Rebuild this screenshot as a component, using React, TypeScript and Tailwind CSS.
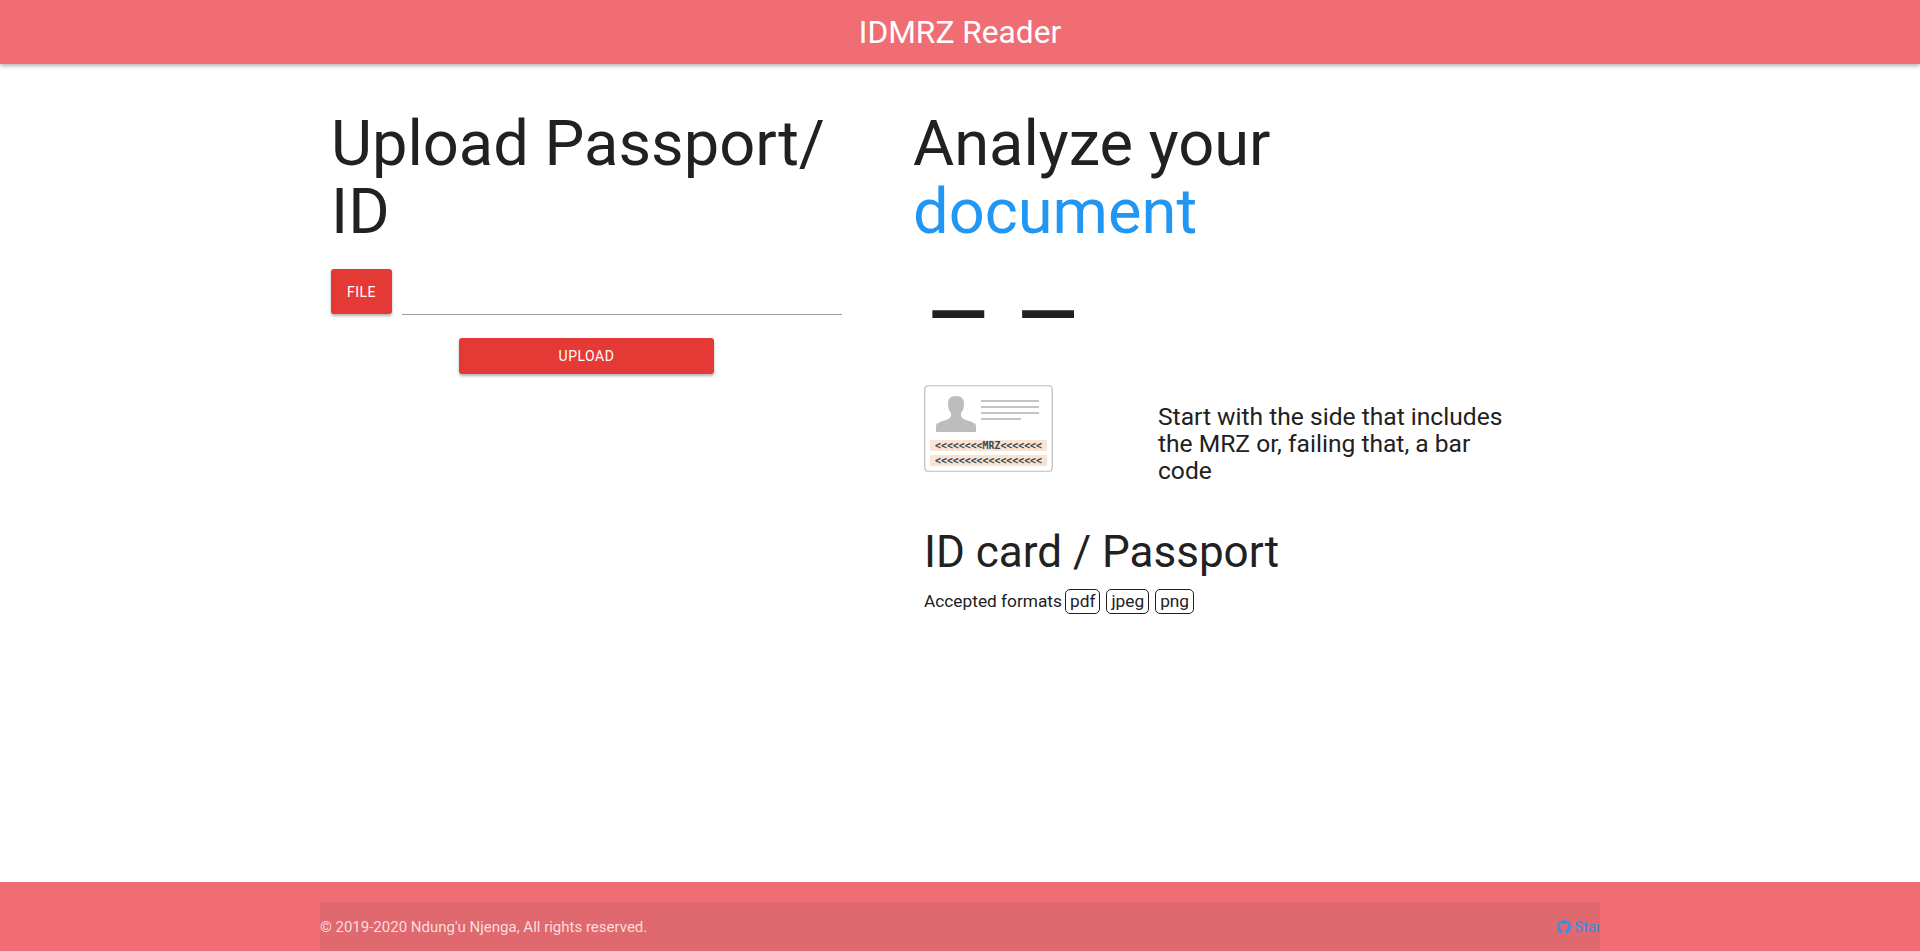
import { FaGithub } from "react-icons/fa";

const font = { fontFamily: "Roboto, sans-serif" };

function MrzCard() {
  return (
    <svg width="129" height="87" viewBox="0 0 129 87" className="block shrink-0">
      <rect x="0.75" y="0.75" width="127.5" height="85.5" rx="3.5" fill="#fff" stroke="#bdbdbd" strokeWidth="1.2" />
      <path
        d="M12 47v-6c0-3 4-4 10-6 3-1 4-2 5-4v-3c-2-2-3-5-3-9 0-5 2-8 8-8s8 3 8 8c0 4-1 7-3 9v3c1 2 2 3 5 4 6 2 10 3 10 6v6z"
        fill="#bdbdbd"
      />
      <rect x="57" y="15" width="58" height="2" fill="#c4c4c4" />
      <rect x="57" y="21" width="58" height="2" fill="#c4c4c4" />
      <rect x="57" y="27" width="58" height="2" fill="#c4c4c4" />
      <rect x="57" y="33" width="40" height="2" fill="#c4c4c4" />
      <rect x="6" y="55" width="117" height="11" fill="#fbe3d3" />
      <rect x="6" y="70" width="117" height="11" fill="#fbe3d3" />
      <text x="64.5" y="64" textAnchor="middle" fontSize="10.5" fontWeight="700" fontFamily="'DejaVu Sans Mono', monospace" fill="#37474f" textLength="107" lengthAdjust="spacingAndGlyphs">
        {"<<<<<<<<MRZ<<<<<<<"}
      </text>
      <text x="64.5" y="79" textAnchor="middle" fontSize="10.5" fontWeight="700" fontFamily="'DejaVu Sans Mono', monospace" fill="#37474f" textLength="107" lengthAdjust="spacingAndGlyphs">
        {"<<<<<<<<<<<<<<<<<<"}
      </text>
    </svg>
  );
}

function Chip({ children }: { children: string }) {
  return (
    <span className="inline-block rounded-[5px] border border-[#212121] px-1 text-[17.3px] leading-[23px]">{children}</span>
  );
}

export default function App() {
  return (
    <div className="flex h-[951px] flex-col overflow-hidden bg-white text-[#212121]" style={font}>
      <header className="flex h-16 shrink-0 items-center justify-center bg-[#f06d73] pt-[2px] text-[31.7px] text-white shadow-[0_2px_4px_rgba(0,0,0,0.3)]">
        IDMRZ Reader
      </header>

      <main className="mx-auto flex w-[1280px] flex-1">
        <section className="w-[582px] pl-[11px] pt-[45px]">
          <h1 className="w-[510px] text-[63.2px] leading-[68px] font-normal">Upload Passport/ ID</h1>
          <div className="mt-[24px] flex items-end">
            <button className="h-[45px] w-[61px] rounded-[3px] bg-[#e53935] text-sm tracking-[0.5px] text-white shadow-[0_2px_3px_rgba(0,0,0,0.3)]">
              FILE
            </button>
            <div className="ml-[10px] -mb-px w-[440px] border-b-[1.5px] border-[#9e9e9e]" />
          </div>
          <div className="mt-6 flex w-[511px] justify-center">
            <button className="h-9 w-[255px] rounded-[3px] bg-[#e53935] text-sm tracking-[0.5px] text-white shadow-[0_2px_3px_rgba(0,0,0,0.3)]">
              UPLOAD
            </button>
          </div>
        </section>

        <section className="flex-1 pl-[11px] pt-[45px]">
          <h1 className="text-[63.2px] leading-[68px] font-normal">
            Analyze your
            <br />
            <span className="text-[#2196f3]">document</span>
          </h1>
          <div className="mt-[23px] h-[96px] pl-[11px] text-[106px] leading-[96px] font-normal whitespace-pre [word-spacing:-6px]">– –</div>
          <div className="mt-[21px] pl-[11px]">
            <div className="flex items-start">
              <MrzCard />
              <p className="ml-[105px] w-[360px] pt-[18px] text-[24.6px] leading-[27px]">
                Start with the side that includes the MRZ or, failing that, a bar code
              </p>
            </div>
            <h2 className="mt-[42px] text-[44px] leading-[52px]">ID card / Passport</h2>
            <div className="mt-[11px] flex items-center text-[17.3px]">
              <span className="mr-[3px]">Accepted formats</span>
              <span className="flex gap-[6px]">
                <Chip>pdf</Chip>
                <Chip>jpeg</Chip>
                <Chip>png</Chip>
              </span>
            </div>
          </div>
        </section>
      </main>

      <footer className="h-[69px] shrink-0 bg-[#f06d73] pt-5">
        <div className="mx-auto flex h-[49px] w-[1280px] items-center justify-between overflow-hidden bg-[#e0696f] pt-px text-[15px] text-[#fbdcdd]">
          <span>© 2019-2020 Ndung'u Njenga, All rights reserved.</span>
          <a className="flex w-[43px] shrink-0 items-center gap-[3px] whitespace-nowrap text-[#2196f3]">
            <FaGithub className="shrink-0 text-sm" />
            Star
          </a>
        </div>
      </footer>
    </div>
  );
}
